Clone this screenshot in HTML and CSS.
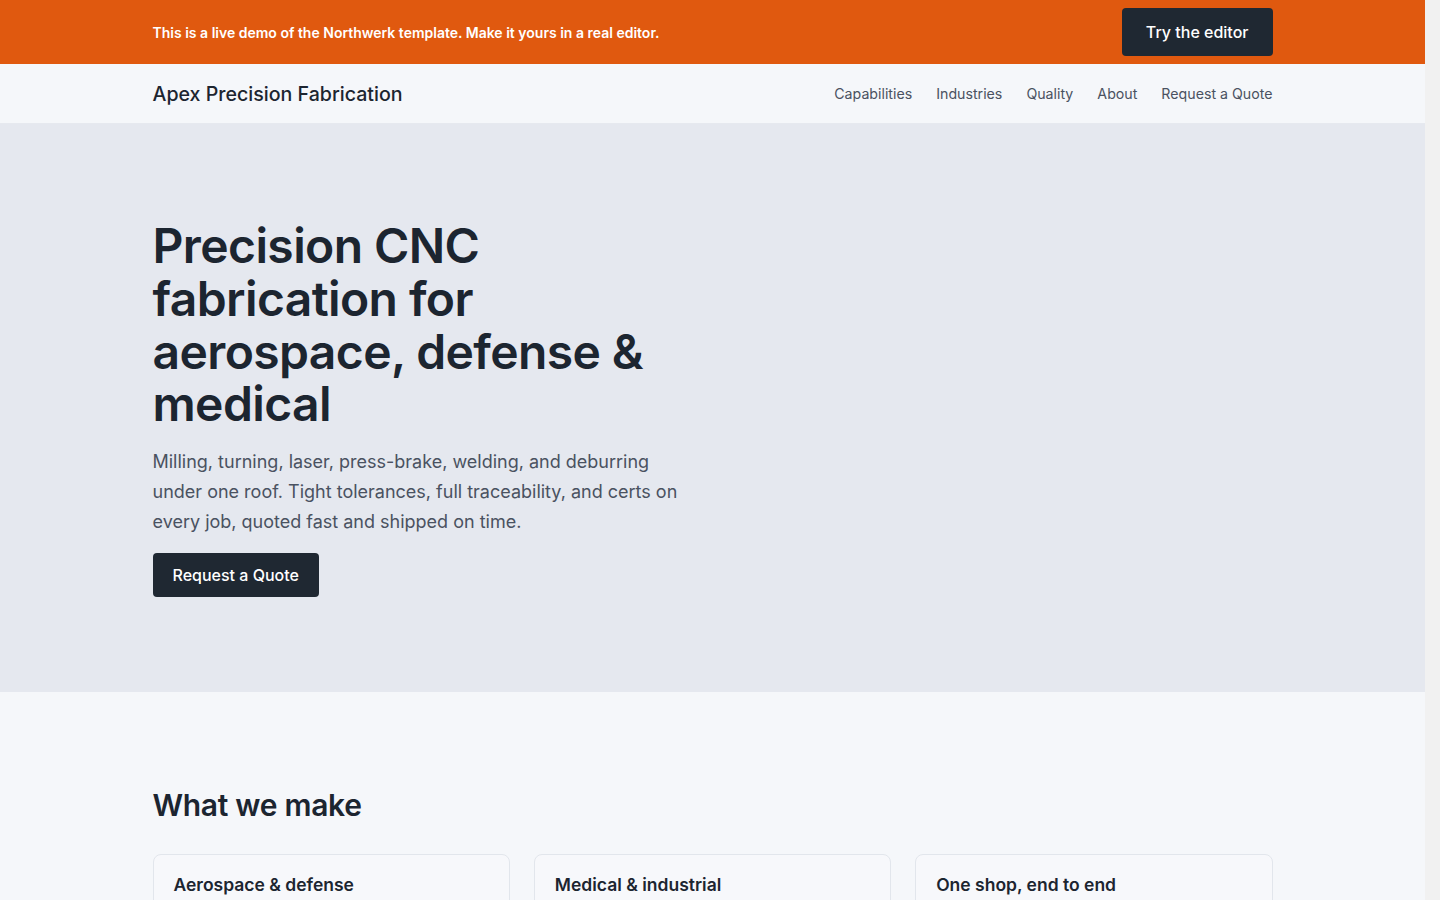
FILE: index.html
```html
<!DOCTYPE html>
<html lang="en">
<head>
    <meta charset="UTF-8">
    <meta name="viewport" content="width=device-width, initial-scale=1.0">
    <title>Apex Precision Fabrication</title>
    <link rel="stylesheet" href="styles.css">
</head>
<body>
    <div class="demo-bar">
        <div class="wrap demo-inner">
            <p class="demo-text">This is a live demo of the Northwerk template. Make it yours in a real editor.</p>
            <a href="#" class="demo-btn">Try the editor</a>
        </div>
    </div>

    <header class="site-header">
        <div class="wrap header-inner">
            <a href="#" class="logo">Apex Precision Fabrication</a>
            <nav class="nav">
                <a href="#">Capabilities</a>
                <a href="#">Industries</a>
                <a href="#">Quality</a>
                <a href="#">About</a>
                <a href="#">Request a Quote</a>
            </nav>
        </div>
    </header>

    <section class="hero">
        <div class="wrap hero-grid">
            <div class="hero-copy">
                <h1 class="hero-title">Precision CNC fabrication for aerospace, defense &amp; medical</h1>
                <p class="hero-text">Milling, turning, laser, press-brake, welding, and deburring under one roof. Tight tolerances, full traceability, and certs on every job, quoted fast and shipped on time.</p>
                <a href="#" class="btn">Request a Quote</a>
            </div>
            <div></div>
        </div>
    </section>

    <section class="section">
        <div class="wrap">
            <h2 class="section-title">What we make</h2>
            <div class="cards">
                <div class="card">
                    <h3 class="card-title">Aerospace &amp; defense</h3>
                    <p class="card-text">Flight-critical brackets, housings, and structural parts machined to AS9100 standards with first article inspection.</p>
                </div>
                <div class="card">
                    <h3 class="card-title">Medical &amp; industrial</h3>
                    <p class="card-text">Surgical instrument components, fixtures, and enclosures in stainless, titanium, and engineering plastics.</p>
                </div>
                <div class="card">
                    <h3 class="card-title">One shop, end to end</h3>
                    <p class="card-text">From raw stock to finished, inspected parts: cutting, forming, welding, finishing, and assembly in one building.</p>
                </div>
            </div>
        </div>
    </section>
</body>
</html>
```

FILE: styles.css
```css
* {
    margin: 0;
    padding: 0;
    box-sizing: border-box;
}

html {
    overflow-y: scroll;
    background: #f1f1f1;
}

/* leave room on the right like a classic scrollbar gutter */
body {
    font-family: 'Inter', 'Noto Sans', sans-serif;
    background: #f5f7fa;
    color: #1c2530;
    margin-right: 15px;
}

a {
    text-decoration: none;
    color: inherit;
}

.wrap {
    max-width: 1120px;
    margin: 0 auto;
}

.demo-bar {
    background: #e0590f;
    height: 64px;
}

.demo-inner {
    height: 100%;
    display: flex;
    align-items: center;
    justify-content: space-between;
}

.demo-text {
    color: #fff;
    font-size: 14px;
    font-weight: 600;
}

.demo-btn {
    background: #1f2832;
    color: #fff;
    font-size: 16px;
    font-weight: 500;
    height: 48px;
    padding: 0 24px;
    border-radius: 4px;
    display: flex;
    align-items: center;
}

.site-header {
    background: #f5f7fa;
    border-bottom: 1px solid #e6e9ef;
}

.header-inner {
    height: 59px;
    display: flex;
    align-items: center;
    justify-content: space-between;
}

.logo {
    font-size: 19.6px;
    font-weight: 500;
    color: #1c2530;
}

.nav {
    display: flex;
    gap: 24px;
}

.nav a {
    font-size: 14.2px;
    color: #4a5261;
}

.hero {
    background: #e5e8ef;
    padding: 96px 0 95px;
}

.hero-grid {
    display: grid;
    grid-template-columns: 1fr 1fr;
    gap: 48px;
}

.hero-title {
    font-size: 48px;
    font-weight: 600;
    line-height: 1.1;
    letter-spacing: -0.6px;
    color: #1c2530;
    max-width: 520px;
}

.hero-text {
    margin-top: 16px;
    font-size: 18px;
    line-height: 30px;
    color: #4a5261;
}

.btn {
    display: inline-flex;
    align-items: center;
    margin-top: 16px;
    height: 44px;
    padding: 0 20px;
    background: #1f2832;
    color: #fff;
    font-size: 16px;
    font-weight: 500;
    border-radius: 4px;
}

.section {
    padding: 94px 0 96px;
}

.section-title {
    font-size: 30px;
    font-weight: 600;
    line-height: 38px;
    letter-spacing: -0.3px;
    margin-bottom: 30px;
}

.cards {
    display: grid;
    grid-template-columns: repeat(3, 1fr);
    gap: 24px;
}

.card {
    background: #f7f8fb;
    border: 1px solid #e2e6ec;
    border-radius: 8px;
    padding: 18px 20px 20px;
}

.card-title {
    font-size: 17.5px;
    font-weight: 600;
    line-height: 24px;
}

.card-text {
    margin-top: 8px;
    font-size: 15px;
    line-height: 1.6;
    color: #4a5261;
}
```
